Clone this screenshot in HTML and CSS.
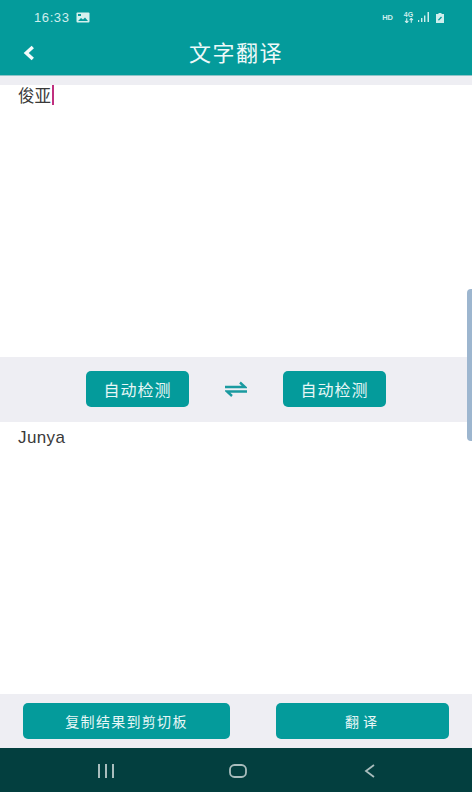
FILE: index.html
```html
<!DOCTYPE html>
<html lang="zh">
<head>
<meta charset="utf-8">
<title>文字翻译</title>
<link rel="stylesheet" href="styles.css">
</head>
<body>
<div class="screen">
  <header class="header">
    <div class="status">
      <div class="status-left">
        <span class="time">16:33</span>
        <svg class="pic" viewBox="0 0 14 11"><rect x="0.5" y="0.5" width="13" height="10" rx="1" fill="#d5f0ee"/><path d="M2 9 5 6l2 1.500L9 5.500 12 9z" fill="#049b9b"/><rect x="2" y="2" width="3" height="2" fill="#049b9b"/></svg>
      </div>
      <div class="status-right">
        <span class="hd">HD</span>
        <span class="net"><span>4G</span><svg viewBox="0 0 11 5"><path d="M3 0v5M1.200 3 3 5l1.800-2M8 5V0M6.200 2 8 0l1.800 2" stroke="#cfeeed" stroke-width="1.200" fill="none"/></svg></span>
        <svg class="signal" viewBox="0 0 13 10"><path d="M1 8h1.200v2H1zM4 6h1.400v4H4zM7 3.500h1.400V10H7zM10.500 0h1.500v10h-1.500z" fill="#cfeeed"/></svg>
        <svg class="batt" viewBox="0 0 10 11"><path d="M1 2h2.500V1h3v1H9v9H1z" fill="#cfeeed"/><path d="M2.800 8 6 4.500 7 5.500 4 8.500z" fill="#049b9b"/></svg>
      </div>
    </div>
    <div class="appbar">
      <svg class="back" viewBox="0 0 12 16"><path d="M9.800 2 3.200 8l6.600 6" fill="none" stroke="#f4fbfb" stroke-width="3.400"/></svg>
      <h1 class="title">文字翻译</h1>
    </div>
  </header>
  <div class="gap-top"></div>
  <div class="pane">
    <div class="input-text">俊亚<span class="caret"></span></div>
  </div>
  <div class="lang-bar">
    <button class="btn lang">自动检测</button>
    <svg class="swap" viewBox="0 0 22 16"><path d="M0 6h20l-5-4.500M22 10.500H2l5 4.500" fill="none" stroke="#1a9aa0" stroke-width="2.400"/></svg>
    <button class="btn lang">自动检测</button>
  </div>
  <div class="pane">
    <div class="output-text">Junya</div>
  </div>
  <div class="action-bar">
    <button class="btn copy">复制结果到剪切板</button>
    <button class="btn translate">翻 译</button>
  </div>
  <nav class="navbar">
    <svg class="nav-recents" viewBox="0 0 18 14"><path d="M2 0v14M9 0v14M16 0v14" stroke="#a9bdbd" stroke-width="2"/></svg>
    <svg class="nav-home" viewBox="0 0 18 14"><rect x="1" y="1" width="16" height="12" rx="4.500" fill="none" stroke="#a9bdbd" stroke-width="1.800"/></svg>
    <svg class="nav-back" viewBox="0 0 12 14"><path d="M10 1 2 7l8 6" fill="none" stroke="#a9bdbd" stroke-width="1.800"/></svg>
  </nav>
  <div class="scroll-thumb"></div>
</div>
</body>
</html>
```
FILE: styles.css
```css
* { box-sizing: border-box; }
html, body { margin: 0; padding: 0; background: #fff; }
.screen {
  position: relative;
  width: 472px;
  height: 792px;
  overflow: hidden;
  display: flex;
  flex-direction: column;
  font-family: "Noto Sans CJK SC", "Noto Sans", sans-serif;
}
.header {
  height: 76px;
  background: #049b9b;
  border-bottom: 1px solid #8fc4c8;
  flex: none;
}
.status {
  height: 34px;
  padding: 0 27px 0 34px;
  display: flex;
  justify-content: space-between;
  align-items: center;
  color: #cfeeed;
}
.status-left { display: flex; align-items: center; gap: 6px; }
.time { font: 13px "Liberation Sans", sans-serif; letter-spacing: 0.6px; }
.pic { width: 14px; height: 11px; }
.status-right { display: flex; align-items: center; }
.hd { font: bold 7.500px "Liberation Sans", sans-serif; margin-right: 10px; }
.net { display: flex; flex-direction: column; align-items: center; width: 11px; margin-right: 3px; font: bold 7px/7px "Liberation Sans", sans-serif; }
.net svg { width: 10px; height: 5px; display: block; }
.signal { width: 13px; height: 10px; margin-right: 5px; }
.batt { width: 10px; height: 11px; }
.appbar {
  height: 41px;
  position: relative;
  display: flex;
  align-items: center;
  justify-content: center;
}
.back { position: absolute; left: 23px; top: 11px; width: 12px; height: 16px; }
.title {
  margin: -8px 0 0;
  font-size: 22px;
  font-weight: 400;
  line-height: 28px;
  color: #eef9f9;
  letter-spacing: 1.500px;
}
.gap-top { height: 9px; background: #eeeef3; flex: none; }
.pane { flex: 1; background: #fff; min-height: 0; }
.input-text, .output-text {
  padding-left: 18px;
  color: #3a3a3a;
  font-size: 16.500px;
  line-height: 22px;
  display: flex;
  align-items: center;
}
.input-text { margin-top: -1px; }
.output-text { font-family: "Liberation Sans", sans-serif; font-size: 17px; letter-spacing: 0.4px; padding-top: 5px; }
.caret { width: 2px; height: 20px; background: #c0307f; margin-left: 1px; }
.lang-bar {
  height: 65px;
  flex: none;
  background: #eeeef3;
  display: flex;
  align-items: center;
  justify-content: center;
  gap: 36px;
  padding-bottom: 1px;
}
.btn {
  border: 0;
  padding: 0;
  height: 36px;
  border-radius: 5px;
  background: #049b9b;
  color: #e8f7f7;
  font-family: inherit;
}
.lang { width: 103px; font-size: 16px; letter-spacing: 1px; }
.swap { width: 22px; height: 16px; }
.action-bar {
  height: 54px;
  flex: none;
  background: #eeeef3;
  display: flex;
  align-items: center;
  justify-content: space-between;
  padding: 0 23px;
}
.copy { width: 207px; font-size: 14px; letter-spacing: 1.300px; }
.translate { width: 173px; font-size: 14px; word-spacing: 1px; padding-right: 3px; }
.navbar {
  height: 44px;
  flex: none;
  background: #033f3f;
  display: flex;
  align-items: center;
  justify-content: space-between;
  padding: 2px 96px 0 97px;
}
.nav-recents { width: 18px; height: 14px; }
.nav-home { width: 18px; height: 14px; margin-right: 3px; }
.nav-back { width: 12px; height: 14px; }
.scroll-thumb {
  position: absolute;
  right: 0;
  top: 289px;
  width: 5px;
  height: 152px;
  background: #9db6cf;
  border-radius: 4px 0 0 4px;
}
```
